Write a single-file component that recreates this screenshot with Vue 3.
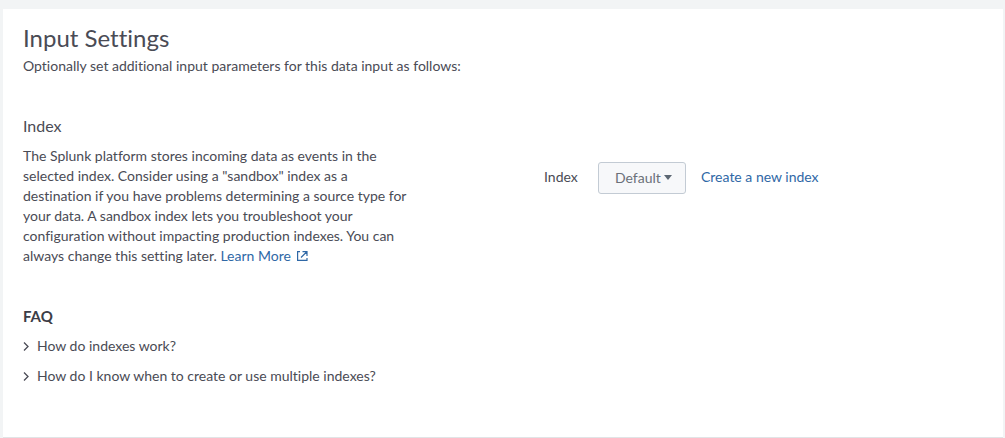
<script setup>
import { ref } from 'vue'

const index = ref('default')
const questions = [
  'How do indexes work?',
  'How do I know when to create or use multiple indexes?'
]
</script>

<template>
  <main class="page">
    <section class="panel">
      <h1 class="title">Input Settings</h1>
      <p class="intro">Optionally set additional input parameters for this data input as follows:</p>

      <div class="setting">
        <div class="about">
          <h2 class="subtitle">Index</h2>
          <p class="description">
            The Splunk platform stores incoming data as events in the
            selected index. Consider using a "sandbox" index as a
            destination if you have problems determining a source type for
            your data. A sandbox index lets you troubleshoot your
            configuration without impacting production indexes. You can
            always change this setting later.
            <a class="link" href="#learn-more">Learn More<svg class="external" viewBox="0 0 11 10" aria-hidden="true">
              <path d="M3 0.6H0.6V9.4H10V7M5.5 0.6H10V5M9.8 0.8L4 6.5" />
            </svg></a>
          </p>
        </div>

        <div class="controls">
          <label class="label" for="index-select">Index</label>
          <div class="picker">
            <select id="index-select" v-model="index" class="select">
              <option value="default">Default</option>
            </select>
            <svg class="caret" viewBox="0 0 8 5" aria-hidden="true"><path d="M0 0H8L4 5Z" /></svg>
          </div>
          <a class="link" href="#create-index">Create a new index</a>
        </div>
      </div>

      <h2 class="faq-title">FAQ</h2>
      <ul class="faq">
        <li v-for="q in questions" :key="q">
          <button class="question" type="button" aria-expanded="false">
            <svg class="chevron" viewBox="0 0 6 9" aria-hidden="true"><path d="M1 0.5L5 4.5L1 8.5" /></svg>
            <span>{{ q }}</span>
          </button>
        </li>
      </ul>
    </section>
  </main>
</template>

<style>
body {
  margin: 0;
  background: #f2f4f5;
}
</style>

<style scoped>
.page {
  box-sizing: border-box;
  min-height: 100vh;
  padding: 9px 2px 0 3px;
  display: flex;
  flex-direction: column;
  font-family: Lato, "Liberation Sans", sans-serif;
  font-size: 14px;
  line-height: 20px;
  font-variant-ligatures: none;
  color: #4a4b55;
}
.panel {
  flex: 1;
  padding: 15px 20px 40px;
  background: #fff;
  border-bottom: 1px solid #e1e4e6;
}
.title {
  margin: 0;
  font-size: 24px;
  line-height: 28px;
  font-weight: 400;
}
.intro {
  margin: 4px 0 40px;
}
.setting {
  display: grid;
  grid-template-columns: 388px 1fr;
  column-gap: 133px;
}
.subtitle {
  margin: 0 0 10px;
  font-size: 16px;
  line-height: 20px;
  font-weight: 400;
}
.description {
  margin: 0;
}
.link {
  color: #2f68a6;
  text-decoration: none;
}
.external {
  width: 11px;
  height: 10px;
  margin-left: 6px;
  fill: none;
  stroke: currentColor;
  stroke-width: 1.2;
}
.controls {
  display: flex;
  align-items: center;
  align-self: start;
  padding-top: 44px;
}
.label {
  width: 54px;
}
.picker {
  position: relative;
  margin: 2px 15px 0 0;
}
.select {
  appearance: none;
  box-sizing: border-box;
  width: 88px;
  height: 32px;
  display: block;
  margin: 0;
  padding: 0 16px;
  border: 1px solid #c3cbd4;
  border-radius: 3px;
  background: #f7f8fa;
  font: inherit;
  color: #6b7079;
}
.caret {
  position: absolute;
  top: 13px;
  right: 14px;
  width: 8px;
  height: 5px;
  fill: #5c6773;
  pointer-events: none;
}
.faq-title {
  margin: 40px 0 10px;
  font-size: 15px;
  line-height: 20px;
  font-weight: 700;
  color: #3c3d47;
}
.faq {
  margin: 0;
  padding: 0;
  list-style: none;
  display: grid;
  row-gap: 10px;
}
.question {
  display: flex;
  align-items: center;
  gap: 8px;
  padding: 0;
  border: 0;
  background: none;
  font: inherit;
  color: inherit;
  text-align: left;
}
.chevron {
  width: 6px;
  height: 9px;
  fill: none;
  stroke: currentColor;
  stroke-width: 1.3;
}
</style>
